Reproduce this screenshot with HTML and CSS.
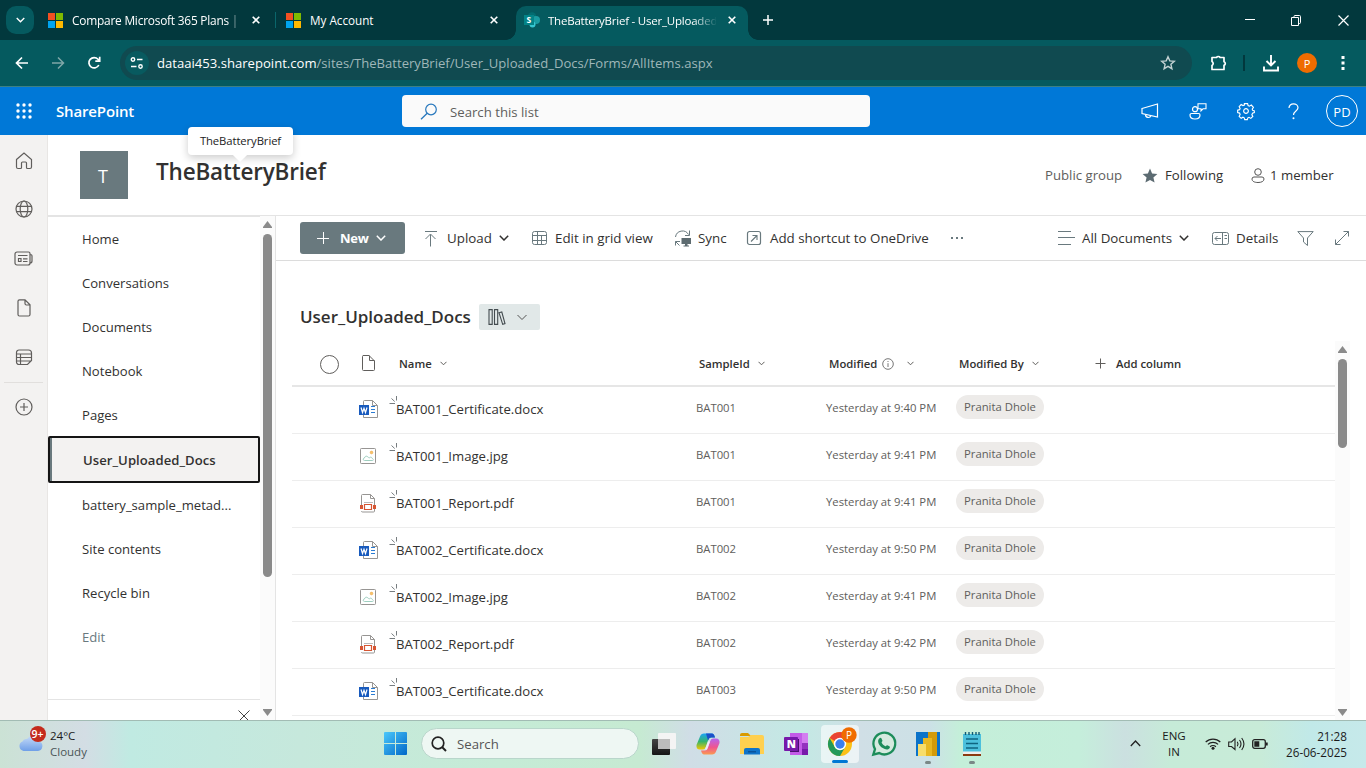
FILE: index.html
```html
<!DOCTYPE html>
<html lang="en">
<head>
<meta charset="utf-8">
<title>TheBatteryBrief - User_Uploaded_Docs</title>
<link rel="stylesheet" href="styles.css">
</head>
<body>
<svg class="defs" aria-hidden="true">
  <symbol id="ms" viewBox="0 0 15 15"><path fill="#f25022" d="M0 0h7v7H0z"/><path fill="#7fba00" d="M8 0h7v7H8z"/><path fill="#00a4ef" d="M0 8h7v7H0z"/><path fill="#ffb900" d="M8 8h7v7H8z"/></symbol>
  <symbol id="x" viewBox="0 0 8 8"><path d="M.7.7l6.6 6.6M7.3.7L.7 7.3" fill="none" stroke="currentColor" stroke-width="1.6"/></symbol>
  <symbol id="chev" viewBox="0 0 10 6"><path d="M.8.8L5 5 9.2.8" fill="none" stroke="currentColor" stroke-width="1.5"/></symbol>
  <symbol id="chev-s" viewBox="0 0 7 5"><path d="M.5.8l3 3 3-3" fill="none" stroke="#605e5c"/></symbol>
  <symbol id="page" viewBox="0 0 14 18"><path d="M2.500.8h5.500l5 5v9.700a1.500 1.500 0 0 1-1.500 1.500h-9A1.500 1.500 0 0 1 1 15.500V2.300A1.500 1.500 0 0 1 2.500.8zM8 1v3.500A1.500 1.500 0 0 0 9.500 6H13" fill="none" stroke="currentColor" stroke-width="1.200"/></symbol>
  <symbol id="word" viewBox="0 0 19 19"><path d="M4.500 5V1.500A1 1 0 0 1 5.500.5h8l5 5v12h-14v-3M13.500.5v5h5" fill="#fff" stroke="#979593"/><path d="M12 6.500h4M12 9.500h4M12 12.500h4" stroke="#2b7cd3"/><path fill="#185abd" d="M0 5h10v10H0z"/><path d="M2 7.500l1.500 5L5 8.200l1.500 4.300L8 7.500" fill="none" stroke="#fff" stroke-width="1.200"/></symbol>
  <symbol id="img" viewBox="0 0 17 17"><rect x=".5" y=".5" width="15" height="15" rx=".8" fill="#fff" stroke="#979593"/><circle cx="11.500" cy="4.500" r="1.400" fill="#f8c36b" stroke="#eaa444" stroke-width=".5"/><path d="M4.500 12.500c-1.700 0-1.700-2.500 0-2.500 0-1.500 2-2.500 3.300-1.200 1 .4.800 1.200 1.400 1.200.8-.9 1.800-1.200 2.600-.3.700.4.300 1 1 1.300.9.500.6 1.500-.3 1.500z" fill="none" stroke="#9fcfc0"/></symbol>
  <symbol id="pdf" viewBox="0 0 17 19"><path d="M1.500 11V1.500a1 1 0 0 1 1-1h8l4 4V17a1 1 0 0 1-1 1h-11a1 1 0 0 1-1-1M10.500.5v4h4" fill="#fff" stroke="#979593"/><path d="M4 8.500h9" stroke="#bbb"/><path d="M0 11h3v4H0zM13 11h3v4h-3z" fill="#d65532"/><path d="M4.500 10.500h7v5h-7z" fill="#fff" stroke="#d65532" stroke-width="1.200"/></symbol>
  <symbol id="new" viewBox="0 0 9 9"><path d="M.5 7.500H6M2.500 2.500l3.200 3M7.500 0v4.500" fill="none" stroke="#777d80"/></symbol>
  <symbol id="up" viewBox="0 0 9 7"><path d="M4.500 0L9 6v1H0V6z" fill="#8a8a8a"/></symbol>
  <symbol id="person" viewBox="0 0 14 15"><circle cx="7" cy="4" r="3.300" fill="none" stroke="currentColor"/><path d="M3 9h8a2 2 0 0 1 2 2c0 2.400-2.600 3.500-6 3.500S1 13.400 1 11a2 2 0 0 1 2-2z" fill="none" stroke="currentColor"/></symbol>
</svg>

<header class="tabs">
  <button class="tabsearch"><svg width="9" height="6"><use href="#chev"/></svg></button>
  <div class="tab t1"><svg width="15" height="15"><use href="#ms"/></svg><span class="tt fade1">Compare Microsoft 365 Plans | I</span><svg width="8" height="8"><use href="#x"/></svg></div>
  <div class="tab t2"><svg width="15" height="15"><use href="#ms"/></svg><span class="tt">My Account</span><svg width="8" height="8"><use href="#x"/></svg></div>
  <div class="tab t3">
    <svg width="16" height="16" viewBox="0 0 16 16"><circle cx="8" cy="4.500" r="4.300" fill="#036c70"/><circle cx="12" cy="8" r="4" fill="#1a9ba1"/><circle cx="8.500" cy="12.500" r="3" fill="#37c6d0"/><path fill="#038387" d="M0 3h10v10H0z"/><text x="2.600" y="11" font-size="8.500" font-weight="700" fill="#fff">S</text></svg>
    <span class="tt fade3">TheBatteryBrief - User_Uploaded</span><svg width="8" height="8"><use href="#x"/></svg>
  </div>
  <svg class="plus" width="12" height="12"><path d="M6 1v10M1 6h10" stroke="#fff" stroke-width="1.500"/></svg>
  <div class="win">
    <svg width="10" height="10"><path d="M0 4.500h10" stroke="#fff"/></svg>
    <svg width="11" height="11"><path d="M.5 2.500h7v8h-7zM3 2.500V1.500a1 1 0 0 1 1-1h4.500a1 1 0 0 1 1 1v6a1 1 0 0 1-1 1h-1" fill="none" stroke="#fff"/></svg>
    <svg width="11" height="11"><path d="M.5.5l10 10M10.500.5l-10 10" stroke="#fff" stroke-width="1.200"/></svg>
  </div>
</header>

<div class="addr">
  <svg class="back" width="14" height="14"><path d="M13 7H2M7 1.500L1.500 7 7 12.500" fill="none" stroke="#fff" stroke-width="1.700"/></svg>
  <svg class="fwd" width="14" height="14"><path d="M1 7h11M7 1.500L12.500 7 7 12.500" fill="none" stroke="#7fa6a8" stroke-width="1.500"/></svg>
  <svg class="reload" width="14" height="14"><path d="M11.800 9A5.200 5.200 0 1 1 11 3.300L12.500 5M12.700.8V5.200H8.300" fill="none" stroke="#fff" stroke-width="1.700"/></svg>
  <div class="pill">
    <span class="tune"><svg width="14" height="12"><path d="M7 2.500h5.500M1 9.500h5.500" stroke="#fff" stroke-width="1.600"/><circle cx="3" cy="2.500" r="1.700" fill="none" stroke="#fff" stroke-width="1.400"/><circle cx="10.500" cy="9.500" r="1.700" fill="none" stroke="#fff" stroke-width="1.400"/></svg></span>
    <span class="url"><b>dataai453.sharepoint.com</b>/sites/TheBatteryBrief/User_Uploaded_Docs/Forms/AllItems.aspx</span>
    <svg class="star" width="16" height="16" viewBox="0 0 16 16"><path d="M8 1.800l1.800 4.100 4.500.4-3.400 3 1 4.400L8 11.400l-3.900 2.300 1-4.400-3.400-3 4.500-.4z" fill="none" stroke="#c3d2d3" stroke-width="1.400"/></svg>
  </div>
  <svg class="ext" width="18" height="18"><path d="M2 3.500h4.500a2 1.800 0 0 1 3.600 0H14v4.200a1.900 1.900 0 0 1 0 3.600v4.200H2v-4a2.300 2.300 0 0 0 0-4z" fill="none" stroke="#fff" stroke-width="1.700" stroke-linejoin="round"/></svg>
  <i class="vsep"></i>
  <svg class="dl" width="16" height="17"><path d="M8 0v10M3.500 6L8 10.500 12.500 6M1 11.500V15.500h14V11.500" fill="none" stroke="#fff" stroke-width="1.900"/></svg>
  <span class="pava">P</span>
  <svg class="dots" width="4" height="14"><path d="M.5 0h3v3h-3zM.5 5.500h3v3h-3zM.5 11h3v3h-3z" fill="#fff"/></svg>
</div>

<div class="suite">
  <svg class="waffle" width="16" height="16"><g fill="#fff"><circle cx="2" cy="2" r="1.700"/><circle cx="8" cy="2" r="1.700"/><circle cx="14" cy="2" r="1.700"/><circle cx="2" cy="8" r="1.700"/><circle cx="8" cy="8" r="1.700"/><circle cx="14" cy="8" r="1.700"/><circle cx="2" cy="14" r="1.700"/><circle cx="8" cy="14" r="1.700"/><circle cx="14" cy="14" r="1.700"/></g></svg>
  <span class="brand">SharePoint</span>
  <div class="sbox"><svg width="18" height="17"><circle cx="11" cy="6.500" r="5.300" fill="none" stroke="#2878bd" stroke-width="1.200"/><path d="M7.200 10.300L1 16.300" stroke="#2878bd" stroke-width="1.300"/></svg><span>Search this list</span></div>
  <div class="sicons">
    <svg width="18" height="16"><path d="M1 5.500L16.500 1v13L1 10.500zM4.500 11.500c0 3.500 4.500 4 5.500 1" fill="none" stroke="#fff" stroke-width="1.200"/></svg>
    <svg width="18" height="17"><path d="M9 .8h8v5h-3l-2 2v-2H9z" fill="none" stroke="#fff" stroke-width="1.100"/><circle cx="6" cy="6.200" r="2.500" fill="none" stroke="#fff" stroke-width="1.200"/><path d="M2.500 10.500h7a1.500 1.500 0 0 1 1.500 1.500c0 2.500-2 4-5 4s-5-1.500-5-4a1.500 1.500 0 0 1 1.500-1.500z" fill="none" stroke="#fff" stroke-width="1.200"/></svg>
    <svg width="18" height="18" viewBox="-9.500 -9.500 19 19"><path d="M-1.700-7.800h3.400l.5 2 1.400.7 2-1.200 2.200 2.400-1.200 1.900.4 1.300 1.800.5v1.900l-1.900.6-.7 1.600 1 1.900-2.100 2-1.900-1.100-1.200.5-.6 1.900h-2.700l-.6-1.900-1.300-.6-1.900 1.100-2.100-2.100 1-1.900-.6-1.500-2-.5v-2.600l2-.5.600-1.300-1-1.900 2.100-2.200 1.900 1.100 1.500-.6z" fill="none" stroke="#fff" stroke-width="1.200"/><circle r="2.500" fill="none" stroke="#fff" stroke-width="1.200"/></svg>
    <svg width="11" height="17"><path d="M1 5C1 2.500 3 .8 5.500.8S10 2.500 10 4.800C10 8 5.500 8 5.500 12" fill="none" stroke="#fff" stroke-width="1.200"/><circle cx="5.500" cy="15.300" r="1" fill="#fff"/></svg>
    <span class="pd">PD</span>
  </div>
</div>

<main class="main">
  <aside class="rail">
    <svg width="18" height="18"><path d="M1.500 7.500L9 1l7.500 6.500V15A1.500 1.500 0 0 1 15 16.500h-2.500a1 1 0 0 1-1-1V11a1 1 0 0 0-1-1h-3a1 1 0 0 0-1 1v4.500a1 1 0 0 1-1 1H3A1.500 1.500 0 0 1 1.500 15z" fill="none" stroke="#605e5c" stroke-width="1.200"/></svg>
    <svg width="18" height="18"><g fill="none" stroke="#605e5c" stroke-width="1.200"><circle cx="9" cy="9" r="8"/><ellipse cx="9" cy="9" rx="3.800" ry="8"/><path d="M1.500 6.300h15M1.500 11.700h15"/></g></svg>
    <svg width="19" height="15"><path d="M3 1h11.500a1.500 1.500 0 0 1 1.500 1.500v9.500a2 2 0 0 0 2-2V5a1.500 1.500 0 0 0-1.500-1.500M16 12a2 2 0 0 1-2 2H3a2 2 0 0 1-2-2V3a2 2 0 0 1 2-2M4 4.500h9.500M9 7.800h4.500M9 10.500h4.500M4.500 7.500h2.500v3H4.500z" fill="none" stroke="#605e5c" stroke-width="1.200"/></svg>
    <svg width="14" height="18" color="#605e5c"><use href="#page"/></svg>
    <svg width="18" height="17"><path d="M4 1h9.500a3 3 0 0 1 3 3v7.500l-4 4H4a2.500 2.500 0 0 1-2.500-2.500V3.500A2.500 2.500 0 0 1 4 1zM1.500 5h15M1.500 8.500h15M1.500 12h14.500M5.500 5v10.500" fill="none" stroke="#605e5c" stroke-width="1.200"/></svg>
    <i class="raildiv"></i>
    <svg width="18" height="18"><circle cx="9" cy="9" r="8" fill="none" stroke="#605e5c" stroke-width="1.200"/><path d="M9 5v8M5 9h8" stroke="#605e5c" stroke-width="1.200"/></svg>
  </aside>

  <section class="site">
    <div class="shead">
      <span class="logo">T</span>
      <h1>TheBatteryBrief<span class="tip">TheBatteryBrief</span></h1>
      <span class="pub">Public group</span>
      <svg class="fstar" width="16" height="15" viewBox="0 0 16 15"><path d="M8 .5l2.100 4.900 5.300.5-4 3.500 1.200 5.200L8 11.900l-4.600 2.700 1.200-5.200-4-3.500 5.300-.5z" fill="#5c6b72"/></svg>
      <span class="fol">Following</span>
      <svg width="14" height="15" color="#555"><use href="#person"/></svg>
      <span class="mem">1 member</span>
    </div>

    <div class="cols">
      <nav class="nav">
        <a>Home</a><a>Conversations</a><a>Documents</a><a>Notebook</a><a>Pages</a>
        <a class="sel">User_Uploaded_Docs</a>
        <a class="long">battery_sample_metad...</a><a>Site contents</a><a>Recycle bin</a><a class="edit">Edit</a>
        <div class="navfoot"><svg width="12" height="12"><path d="M.5.5l11 11M11.500.5l-11 11" stroke="#444"/></svg></div>
      </nav>
      <div class="sb navsb"><svg width="9" height="7"><use href="#up"/></svg><i></i><svg class="dn" width="9" height="7"><use href="#up"/></svg></div>

      <div class="content">
        <div class="cmd">
          <button class="newb"><svg width="12" height="12"><path d="M6.500 0v12M0 6.500h12" stroke="#fff"/></svg><span>New</span><svg width="10" height="6"><use href="#chev"/></svg></button>
          <span class="c upl"><svg width="14" height="17"><path d="M1 1.500h12M6.500 16.500V4.500M1.500 9l5-5 5 5" fill="none" stroke="#69797e"/></svg><span>Upload</span><svg width="10" height="6"><use href="#chev"/></svg></span>
          <span class="c grid"><svg width="15" height="15"><rect x=".5" y=".5" width="14" height="13" rx="2" fill="none" stroke="#69797e"/><path d="M1 4.500h13M1 9.500h13M5.500 1v13M9.500 4.500v9" stroke="#69797e"/></svg><span>Edit in grid view</span></span>
          <span class="c sync"><svg width="18" height="17"><path d="M1.500 7A7 7 0 0 1 14.500 4.500M15.500.5V5.500H11M6 11.500H1.500v4M1.500 11.500l4 4" fill="none" stroke="#69797e"/><path d="M7.500 8H17v6h-3.500v1.500h1.500v1H9.500v-1H11V14H7.500z" fill="#5d6b70"/></svg><span>Sync</span></span>
          <span class="c short"><svg width="15" height="15"><rect x=".5" y=".5" width="13" height="13" rx="2" fill="none" stroke="#69797e" stroke-width="1.200"/><path d="M4 10.500l6-6M5.500 4.500h4.500v4.500" fill="none" stroke="#69797e" stroke-width="1.100"/></svg><span>Add shortcut to OneDrive</span></span>
          <svg class="more" width="14" height="4"><path d="M1 1h2v2H1zM6 1h2v2H6zM11 1h2v2h-2z" fill="#69797e"/></svg>
          <span class="c all"><svg width="17" height="14"><path d="M0 .5h13M0 6.500h17M0 13.500h13" stroke="#69797e"/></svg><span>All Documents</span><svg width="10" height="6"><use href="#chev"/></svg></span>
          <span class="c det"><svg width="17" height="13"><rect x=".5" y=".5" width="16" height="12" rx="2" fill="none" stroke="#69797e"/><path d="M10.500 1v11M12.500 3.500h2.500M12.500 6.500h2.500M9 6.500H3M5.500 4L3 6.500 5.500 9" fill="none" stroke="#69797e"/></svg><span>Details</span></span>
          <svg class="filt" width="17" height="15"><path d="M.8.6h15.400L10.500 7v7.500L6.500 11V7z" fill="none" stroke="#69797e"/></svg>
          <svg class="exp" width="15" height="15"><path d="M.5 13.500L13.500.5M8.500.5h5v5M.5 8.500v5h5" fill="none" stroke="#69797e"/></svg>
        </div>

        <div class="listwrap">
          <div class="list">
            <div class="ltitle"><h2>User_Uploaded_Docs</h2><span class="lib"><svg width="18" height="16"><path d="M1 .6h3.200v14.800H1zM6.500.6h3.200v14.800H6.500zM11 3.700l2.800-.7 3.200 11.600-2.300.7z" fill="none" stroke="#444c50" stroke-width="1.100"/></svg><svg width="10" height="6"><path d="M.5 1L5 5.500 9.500 1" fill="none" stroke="#555"/></svg></span></div>
            <div class="row head">
              <span class="chk"></span><span class="ficon"><svg width="14" height="18"><path d="M2 .5h6l5.500 5.500V14.500a1 1 0 0 1-1 1H2.500a1 1 0 0 1-1-1v-13a1 1 0 0 1 1-1M8.500.5v5h5" fill="none" stroke="#605e5c"/></svg></span>
              <span class="h hn">Name<svg width="7" height="5"><use href="#chev-s"/></svg></span>
              <span class="h hs">SampleId<svg width="7" height="5"><use href="#chev-s"/></svg></span>
              <span class="h hm">Modified<svg class="info" width="12" height="12"><circle cx="6" cy="6" r="5.300" fill="none" stroke="#777"/><path d="M6 5.200V9M6 3v1" stroke="#777"/></svg><svg class="g" width="7" height="5"><use href="#chev-s"/></svg></span>
              <span class="h hb">Modified By<svg width="7" height="5"><use href="#chev-s"/></svg></span>
              <span class="h ha"><svg width="11" height="11"><path d="M5.500.5v10M.5 5.500h10" stroke="#605e5c"/></svg>Add column</span>
            </div>
            <div class="row"><span></span><span class="ficon"><svg width="19" height="19"><use href="#word"/></svg></span><span class="nm"><svg width="9" height="9"><use href="#new"/></svg>BAT001_Certificate.docx</span><span class="v">BAT001</span><span class="v">Yesterday at 9:40 PM</span><span><b class="who">Pranita Dhole</b></span></div>
            <div class="row"><span></span><span class="ficon"><svg width="17" height="17"><use href="#img"/></svg></span><span class="nm"><svg width="9" height="9"><use href="#new"/></svg>BAT001_Image.jpg</span><span class="v">BAT001</span><span class="v">Yesterday at 9:41 PM</span><span><b class="who">Pranita Dhole</b></span></div>
            <div class="row"><span></span><span class="ficon"><svg width="17" height="19"><use href="#pdf"/></svg></span><span class="nm"><svg width="9" height="9"><use href="#new"/></svg>BAT001_Report.pdf</span><span class="v">BAT001</span><span class="v">Yesterday at 9:41 PM</span><span><b class="who">Pranita Dhole</b></span></div>
            <div class="row"><span></span><span class="ficon"><svg width="19" height="19"><use href="#word"/></svg></span><span class="nm"><svg width="9" height="9"><use href="#new"/></svg>BAT002_Certificate.docx</span><span class="v">BAT002</span><span class="v">Yesterday at 9:50 PM</span><span><b class="who">Pranita Dhole</b></span></div>
            <div class="row"><span></span><span class="ficon"><svg width="17" height="17"><use href="#img"/></svg></span><span class="nm"><svg width="9" height="9"><use href="#new"/></svg>BAT002_Image.jpg</span><span class="v">BAT002</span><span class="v">Yesterday at 9:41 PM</span><span><b class="who">Pranita Dhole</b></span></div>
            <div class="row"><span></span><span class="ficon"><svg width="17" height="19"><use href="#pdf"/></svg></span><span class="nm"><svg width="9" height="9"><use href="#new"/></svg>BAT002_Report.pdf</span><span class="v">BAT002</span><span class="v">Yesterday at 9:42 PM</span><span><b class="who">Pranita Dhole</b></span></div>
            <div class="row"><span></span><span class="ficon"><svg width="19" height="19"><use href="#word"/></svg></span><span class="nm"><svg width="9" height="9"><use href="#new"/></svg>BAT003_Certificate.docx</span><span class="v">BAT003</span><span class="v">Yesterday at 9:50 PM</span><span><b class="who">Pranita Dhole</b></span></div>
          </div>
          <div class="sb listsb"><svg width="9" height="7"><use href="#up"/></svg><i></i><svg class="dn" width="9" height="7"><use href="#up"/></svg></div>
        </div>
      </div>
    </div>
  </section>
</main>

<footer class="task">
  <div class="weather">
    <svg width="28" height="28" viewBox="0 0 28 28"><defs><linearGradient id="cl" x2="0" y2="1"><stop stop-color="#c4daf8"/><stop offset="1" stop-color="#6f9fe8"/></linearGradient></defs><path d="M5.500 26a5 5 0 0 1-1-9.500A4 4 0 0 1 9 14a7 7 0 0 1 12.500 2.500A5 5 0 0 1 20 26z" fill="url(#cl)"/><circle cx="20" cy="9" r="8" fill="#c42b1c"/><text x="13.500" y="13" font-size="10.500" font-weight="600" fill="#fff">9+</text></svg>
    <p>24°C<br><em>Cloudy</em></p>
  </div>
  <svg class="start" width="23" height="23"><defs><linearGradient id="wn" x2="1" y2="1"><stop stop-color="#4cc8fb"/><stop offset="1" stop-color="#0067c8"/></linearGradient></defs><path d="M0 1a1 1 0 0 1 1-1h10v11H0zM12 0h10a1 1 0 0 1 1 1v10H12zM0 12h11v11H1a1 1 0 0 1-1-1zM12 12h11v10a1 1 0 0 1-1 1H12z" fill="url(#wn)"/></svg>
  <div class="tsearch"><svg width="16" height="16"><circle cx="7" cy="7" r="5.800" fill="none" stroke="#222" stroke-width="1.700"/><path d="M11 11l4 4" stroke="#222" stroke-width="2"/></svg><span>Search</span></div>
  <div class="apps">
    <span class="app"><svg width="24" height="24"><defs><linearGradient id="tv" x2="0" y2="1"><stop stop-color="#444"/><stop offset="1" stop-color="#151515"/></linearGradient></defs><rect y="7" width="18" height="16" rx="1" fill="url(#tv)"/><rect x="6" y="1" width="18" height="16" rx="1" fill="#f4f4f4"/><path d="M6 7h12v10H6z" fill="#bcbcbc"/></svg></span>
    <span class="app"><svg width="24" height="24" viewBox="0 0 24 24"><defs><linearGradient id="ca" x2="0" y2="1"><stop stop-color="#1ba5f5"/><stop offset=".5" stop-color="#36b56c"/><stop offset="1" stop-color="#f4c800"/></linearGradient><linearGradient id="cb" x2="0" y2="1"><stop stop-color="#b465f0"/><stop offset=".55" stop-color="#f0558f"/><stop offset="1" stop-color="#fb9a50"/></linearGradient></defs><path d="M8 1.500h8q2 0 3 4h-4q-2 0-3 3l-2 6q-1 3-3 3H4q-4 0-3.500-4.500L4 4.500q1-3 4-3z" fill="url(#ca)"/><path d="M16 22.500H8q-2 0-3-4h4q2 0 3-3l2-6q1-3 3-3h3q4 0 3.500 4.500L20 19.500q-1 3-4 3z" fill="url(#cb)"/><path d="M10 1.500h6q2 0 3 4h-4q-2 0-3 3z" fill="#1b50c9"/><path d="M14 9.500l-3 8H9l3-8z" fill="#f3eaf5"/></svg></span>
    <span class="app"><svg width="25" height="24"><path d="M0 3a2 2 0 0 1 2-2h6l3 3H0z" fill="#d99a00"/><path d="M0 5h8l3-2h11a2 2 0 0 1 2 2v17H0z" fill="#ffd04f"/><path d="M4 22.500V18a2 2 0 0 1 2-2h12a2 2 0 0 1 2 2v4.500z" fill="#0f74c9"/><path d="M8 19h8v1.500H8z" fill="#08539b"/></svg></span>
    <span class="app"><svg width="24" height="24"><path d="M6 1h12v22H6z" fill="#c35be8"/><path d="M18 1h6v10h-6z" fill="#d37df0"/><path d="M18 11h6v6h-6z" fill="#9332bf"/><path d="M18 17h6v6h-6z" fill="#7719aa"/><path d="M6 7h9v13H6z" fill="#4b1070"/><rect y="5" width="14" height="14" rx="1" fill="#7719aa"/><text x="2.800" y="16" font-size="11" font-weight="800" fill="#fff">N</text></svg></span>
    <span class="app on"><svg width="32" height="32" viewBox="0 0 32 32"><circle cx="14" cy="18" r="12" fill="#fbc116"/><path d="M14 18L3.600 12A12 12 0 0 1 24.400 12z" fill="#ea4335"/><path d="M14 30A12 12 0 0 1 3.600 12L8.800 21 14 24l5.200-3z" fill="#23995a"/><circle cx="14" cy="18" r="6.200" fill="#fff"/><circle cx="14" cy="18" r="4.700" fill="#3a7fee"/><circle cx="23" cy="9" r="7.700" fill="#f06c00"/><text x="20" y="12.800" font-size="10" fill="#fff">P</text></svg><i></i></span>
    <span class="app"><svg width="26" height="26" viewBox="0 0 26 26"><path d="M2.300 23.700l1.700-5.600A10.900 10.900 0 1 1 8.200 22.100z" fill="#d5eadf" stroke="#1c8c5a" stroke-width="2.300"/><path d="M8.500 7.300c.9-.9 1.600-.7 2 .2l.9 2.100c.3.700-.8 1.400-.8 1.900.8 1.600 2.100 2.900 3.800 3.700.6 0 1.200-1.300 1.900-1l2.100 1c.7.400.6 1.300.1 2-1.700 2-4.500 1.200-6.700-.1-2-1.200-3.500-3.100-4.200-4.700-.8-1.800-.6-3.800.9-5.100z" fill="#1c8c5a"/></svg></span>
    <span class="app dot"><svg width="24" height="24"><path d="M0 0h24v24H0z" fill="#0b73c9"/><path d="M12 0h9v24h-9z" fill="#d39b0a"/><path d="M7 6h9v18H7z" fill="#e8b822"/><path d="M2 12h8v12H2z" fill="#f7dd6b"/></svg><i></i></span>
    <span class="app dot"><svg width="18" height="26"><path d="M0 3h18v19H0z" fill="#4cc0dc"/><path d="M2.500 1v3M6 1v3M9.500 1v3M13 1v3M16 1v3" stroke="#0f5a75" stroke-width="1.400"/><path d="M3 8h12M3 12.500h12M3 17h12" stroke="#0f6480" stroke-width="1.700"/><path d="M0 20.500h18V23H0z" fill="#eee"/><path d="M0 23h18v2H0z" fill="#8b3a10"/></svg><i></i></span>
  </div>
  <svg class="tchev" width="11" height="7"><path d="M.8 6L5.500 1l4.700 5" fill="none" stroke="#222" stroke-width="1.300"/></svg>
  <p class="lang">ENG<br>IN</p>
  <svg class="wifi" width="16" height="13"><g fill="none" stroke="#222" stroke-width="1.200"><path d="M.7 5a10.500 10.500 0 0 1 14.600 0M2.900 7.400a7.400 7.400 0 0 1 10.200 0M5.100 9.700a4.200 4.200 0 0 1 5.800 0"/></g><circle cx="8" cy="11.300" r="1.500" fill="#222"/></svg>
  <svg class="vol" width="17" height="14"><path d="M.7 5v4.500h2.800L7 12.500V1.700L3.500 5zM9.300 4.800q1.500 2.200 0 4.500M11.500 3q3 4 0 8M13.700 1q4.500 6 0 12" fill="none" stroke="#222" stroke-width="1.100"/></svg>
  <svg class="bat" width="16" height="10"><rect x=".7" y=".7" width="12.600" height="8.600" rx="2" fill="none" stroke="#222" stroke-width="1.300"/><path d="M2.300 2.300h5v5.400h-5zM14 3.500h1.700v3H14z" fill="#222"/></svg>
  <p class="clock">21:28<br>26-06-2025</p>
</footer>
</body>
</html>
```
FILE: styles.css
```css
* { box-sizing: border-box; }
body { margin: 0; width: 1366px; height: 768px; overflow: hidden; display: flex; flex-direction: column; font-family: "Open Sans", "Noto Sans", sans-serif; font-size: 13.1px; color: #323130; background: #fff; white-space: nowrap; }
svg { display: block; flex: none; overflow: visible; }
button { border: 0; padding: 0; font: inherit; }
p, h1, h2 { margin: 0; }
.defs { width: 0; height: 0; position: absolute; }

/* browser tab strip */
.tabs { height: 40px; flex: none; background: #02383d; display: flex; align-items: center; color: #fff; }
.tabsearch { width: 28px; height: 28px; margin-left: 6px; border-radius: 10px; background: #055a5f; color: #fff; display: flex; align-items: center; justify-content: center; }
.tab { display: flex; align-items: center; font-size: 12px; }
.tt { overflow: hidden; margin-left: 9px; }
.t1 { margin-left: 14px; width: 228px; border-right: 1px solid #0a666b; height: 16px; }
.t1 .tt { width: 168px; margin-right: 12px; line-height: 20px; font-size: 11.9px; letter-spacing: -0.22px; }
.fade1 { -webkit-mask-image: linear-gradient(90deg, #000 155px, transparent 170px); }
.t2 { margin-left: 10px; width: 230px; }
.t2 .tt { width: 168px; margin-right: 12px; font-size: 11.7px; }
.t3 { position: relative; height: 34px; align-self: flex-end; width: 232px; padding: 0 0 6px 8px; background: #055a5f; border-radius: 10px 10px 0 0; }
.t3 .tt { width: 168px; margin: 0 12px 0 8px; font-size: 11.5px; letter-spacing: -0.22px; }
.fade3 { -webkit-mask-image: linear-gradient(90deg, #000 145px, transparent 170px); }
.t3::before, .t3::after { content: ""; position: absolute; bottom: 0; width: 10px; height: 10px; }
.t3::before { left: -10px; background: radial-gradient(circle at 0 0, transparent 9.5px, #055a5f 10px); }
.t3::after { right: -10px; background: radial-gradient(circle at 100% 0, transparent 9.5px, #055a5f 10px); }
.plus { margin-left: 14px; }
.win { margin-left: auto; display: flex; align-items: center; gap: 36px; padding-right: 17px; }

/* address bar */
.addr { height: 47px; flex: none; background: linear-gradient(#055a5f, #055a5f) 0 0 / 100% 46px no-repeat #3d8082; display: flex; align-items: center; color: #fff; padding-bottom: 1px; }
.back { margin-left: 15px; }
.fwd, .reload { margin-left: 22px; }
.pill { margin-left: 19px; width: 1072px; height: 34px; border-radius: 17px; background: #104a50; display: flex; align-items: center; }
.tune { width: 24px; height: 24px; margin-left: 5px; border-radius: 50%; background: #085a5f; display: flex; align-items: center; justify-content: center; }
.url { margin-left: 8px; width: 1003px; color: #9fb7b9; font-size: 13.1px; }
.url b { font-weight: 400; color: #fff; }
.ext { margin-left: 18px; }
.vsep { width: 2px; height: 16px; background: #02383d; margin-left: 15px; }
.dl { margin-left: 18px; }
.pava { width: 20px; height: 20px; margin-left: 18px; border-radius: 50%; background: #ef6c00; font-size: 11px; display: flex; align-items: center; justify-content: center; }
.dots { margin-left: 24px; }

/* suite header */
.suite { height: 48px; flex: none; background: #0078d7; color: #fff; display: flex; align-items: center; }
.waffle { margin-left: 16px; }
.brand { margin-left: 24px; width: 346px; font-size: 15px; font-weight: 600; letter-spacing: -0.15px; }
.sbox { width: 468px; height: 32px; border-radius: 4px; background: #fafafa; color: #605e5c; display: flex; align-items: center; padding-left: 18px; gap: 12px; font-size: 13.2px; }
.sbox span { padding-top: 2px; }
.sicons { margin-left: auto; display: flex; align-items: center; padding-right: 8px; }
.sicons svg:nth-child(2) { margin-left: 30px; }
.sicons svg:nth-child(3) { margin-left: 30px; }
.sicons svg:nth-child(4) { margin-left: 33px; }
.pd { width: 32px; height: 32px; margin-left: 27px; border: 1px solid #fff; border-radius: 50%; font-size: 13px; display: flex; align-items: center; justify-content: center; padding-top: 2px; }

.main { flex: 1; min-height: 0; display: flex; }
.rail { width: 48px; background: #f3f2f1; border-right: 1px solid #e8e6e4; display: flex; flex-direction: column; align-items: center; padding-top: 17px; }
.rail svg:nth-child(2) { margin-top: 30px; }
.rail svg:nth-child(3) { margin-top: 33px; }
.rail svg:nth-child(4) { margin-top: 33px; }
.rail svg:nth-child(5) { margin-top: 32px; }
.raildiv { width: 39px; height: 1px; background: #e1dfdd; margin: 16px 0 15px; }

/* site header */
.site { flex: 1; min-width: 0; display: flex; flex-direction: column; }
.shead { height: 81px; flex: none; border-bottom: 1px solid #e4e4e4; display: flex; align-items: center; padding-left: 32px; font-size: 13.2px; }
.logo { width: 48px; height: 48px; background: #69797e; color: #fff; font-size: 18px; display: flex; align-items: center; justify-content: center; padding: 1px 2px 0 0; }
h1 { position: relative; margin: -6px 0 0 28px; width: 889px; font-size: 22.5px; line-height: 32px; font-weight: 600; letter-spacing: -0.18px; }
.tip { position: absolute; left: 32px; top: -29px; width: 105px; height: 28px; border-radius: 4px; background: #fff; box-shadow: 0 3px 9px rgba(0,0,0,.2); font-size: 11.3px; line-height: 28px; font-weight: 400; letter-spacing: -0.1px; text-align: center; color: #222; }
.tip::after { content: ""; position: absolute; left: 47px; bottom: -5px; width: 10px; height: 10px; background: #fff; transform: rotate(45deg); }
.pub { width: 97px; color: #605e5c; }
.fstar { margin: 0 7px 0 0; }
.fol { width: 86px; }
.mem { margin-left: 5px; }

.cols { flex: 1; min-height: 0; display: flex; }
.nav { width: 212px; border-top: 1px solid #e4e4e4; overflow: hidden; }
.nav a { display: block; height: 44px; line-height: 44px; padding-left: 34px; }
.nav .sel { height: 47px; line-height: 44px; margin: -1px 0 0; border: 2px solid #151515; border-radius: 2px; background: #f3f2f1; padding-left: 33px; font-weight: 600; box-shadow: inset 2px 0 #69797e; letter-spacing: 0.05px; }
.nav .edit { color: #69797e; }
.navfoot { margin-top: 40px; height: 24px; border-top: 1px solid #e4e4e4; display: flex; justify-content: flex-end; padding: 10px 10px 0 0; }
.sb { width: 15px; background: #fbfbfb; display: flex; flex-direction: column; align-items: center; }
.sb i { width: 9px; border-radius: 5px; background: #8a8a8a; }
.sb .dn { transform: rotate(180deg); margin-top: auto; margin-bottom: 4px; }
.navsb { padding-top: 5px; }
.navsb i { margin-top: 6px; height: 343px; }

.content { flex: 1; min-width: 0; border-left: 1px solid #e4e4e4; display: flex; flex-direction: column; }
.cmd { height: 45px; flex: none; border-bottom: 1px solid #dcdcdc; display: flex; align-items: center; padding-left: 24px; font-size: 13.35px; }
.c { display: flex; align-items: center; }
.newb { width: 105px; height: 32px; border-radius: 3px; background: #69797e; color: #fff; font-weight: 700; font-size: 13px; display: flex; align-items: center; padding-left: 17px; }
.newb span { margin-left: 11px; width: 36px; letter-spacing: -0.3px; text-align: left; }
.upl { margin-left: 19px; width: 108px; }
.upl span { margin-left: 9px; width: 52px; }
.grid { width: 142px; }
.grid span { margin-left: 8px; }
.sync { width: 73px; }
.sync span { margin-left: 6px; }
.short { width: 203px; }
.short span { margin-left: 8px; }
.all { margin-left: 94px; width: 154px; }
.all span { margin-left: 7px; width: 97px; }
.det { width: 85px; }
.det span { margin-left: 7px; }
.exp { margin-left: 21px; }

.listwrap { flex: 1; min-height: 0; display: flex; }
.list { margin-left: 16px; width: 1043px; overflow: hidden; }
.ltitle { height: 81px; padding: 43px 0 0 8px; display: flex; align-items: flex-start; }
h2 { width: 179px; font-size: 17px; line-height: 25px; font-weight: 600; letter-spacing: -0.02px; }
.lib { width: 61px; height: 26px; background: #e1e8e8; border-radius: 2px; display: flex; align-items: center; gap: 11px; padding-left: 9px; }
.row { display: grid; grid-template-columns: 67px 37px 300px 130px 130px 1fr; height: 47px; border-bottom: 1px solid #ededed; align-items: center; font-size: 11.3px; padding-bottom: 6px; color: #605e5c; }
.head { height: 45px; padding: 0; border-bottom: 2px solid #e6e6e6; grid-template-columns: 67px 40px 300px 130px 130px 137px 1fr; color: #323130; }
.chk { width: 19px; height: 19px; border: 1px solid #605e5c; border-radius: 50%; margin: 1px 0 0 28px; }
.ficon { width: 18px; display: flex; justify-content: center; height: 22px; align-items: center; margin-top: 4px; }
.head .ficon { margin: 0; }
.h { display: flex; align-items: center; font-weight: 600; font-size: 11.3px; }
.h svg { margin-left: 8px; }
.h .info { margin-left: 5px; }
.h .g { margin-left: 13px; }
.ha svg { margin: 0 10px 0 -1px; }
.nm { position: relative; margin-top: 4px; font-size: 13.15px; color: #323130; }
.nm svg { position: absolute; left: -7px; top: -4px; }
.who { display: inline-block; height: 24px; line-height: 24px; border-radius: 12px; padding: 0 8px; background: #edebe9; font-weight: 400; width: 88px; }
.listsb { margin-top: 80px; padding-top: 5px; }
.listsb i { margin-top: 6px; height: 89px; }

/* taskbar */
.task { height: 48px; flex: none; border-top: 1px solid #a2bcb4; display: flex; align-items: center; padding-bottom: 2px; color: #1b1b1b; font-size: 11.5px; line-height: 16px; background: linear-gradient(90deg, #cbe2d5 0, #d3dde4 85px, #c0eae2 130px, #c6e8dc 300px, #c5ebd6 500px, #c6ead2 640px, #d0dde6 690px, #c3e9e4 800px, #d0dfe6 860px, #cce1e6 930px, #c4efd9 960px, #c5eedb 1080px, #cbe0e0 1125px, #c6ebd8 1170px, #c8ebd8 1260px, #c1e9e8 1310px, #c6e9ea 1366px); }
.weather { display: flex; align-items: center; width: 384px; padding-left: 18px; }
.weather p { margin-left: 4px; }
.weather svg { margin-top: -9px; }
.weather em { font-style: normal; color: #4a5557; }
.tsearch { margin-left: 14px; width: 218px; height: 31px; border-radius: 16px; background: #eef7f3; border: 1px solid #b9d6cb; display: flex; align-items: center; padding-left: 9px; gap: 10px; font-size: 13.2px; color: #555; }
.apps { display: flex; margin-left: 6px; }
.app { width: 38px; height: 38px; margin-right: 6px; display: flex; align-items: center; justify-content: center; position: relative; border-radius: 4px; }
.on { background: rgba(255,255,255,.6); }
.on svg { margin: -4px 0 0 4px; }
.app i { position: absolute; bottom: -1px; left: 16px; width: 6px; height: 3px; border-radius: 2px; background: #7a8786; }
.on i { left: 11px; bottom: 0; width: 16px; background: #0078d4; }
.tchev { margin-left: 133px; }
.lang { width: 26px; margin-left: 20px; text-align: center; }
.wifi { margin-left: 18px; }
.vol { margin-left: 7px; }
.bat { margin-left: 7px; }
.clock { margin-left: auto; padding-right: 19px; text-align: right; font-size: 11.7px; }
```
